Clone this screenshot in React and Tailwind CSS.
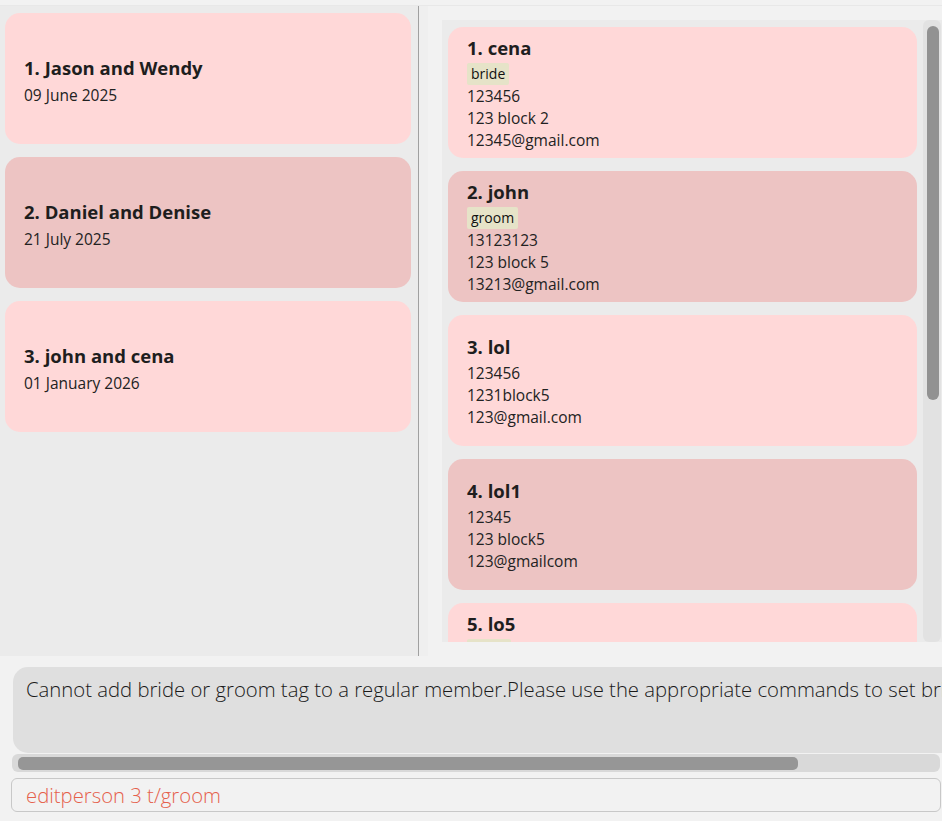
import React from "react"

const weddings = [
  { id: 1, title: "Jason and Wendy", date: "09 June 2025" },
  { id: 2, title: "Daniel and Denise", date: "21 July 2025" },
  { id: 3, title: "john and cena", date: "01 January 2026" },
]

const people = [
  { id: 1, name: "cena", tag: "bride", phone: "123456", address: "123 block 2", email: "12345@gmail.com" },
  { id: 2, name: "john", tag: "groom", phone: "13123123", address: "123 block 5", email: "13213@gmail.com" },
  { id: 3, name: "lol", phone: "123456", address: "1231block5", email: "123@gmail.com" },
  { id: 4, name: "lol1", phone: "12345", address: "123 block5", email: "123@gmailcom" },
  { id: 5, name: "lo5", tag: "guest", phone: "1234", address: "block 9", email: "lo5@gmail.com" },
]

const cardBg = (i) => (i % 2 === 0 ? "bg-[#ffd8d8]" : "bg-[#edc4c3]")

const WeddingCard = ({ wedding, index }) => (
  <div className={`h-[131px] shrink-0 rounded-[15px] ${cardBg(index)} px-[19px] pt-[4px] flex flex-col justify-center`}>
    <div className="text-[18.5px] leading-[26px] font-bold text-[#1e1e1e]">
      {wedding.id}. {wedding.title}
    </div>
    <div className="mt-[3px] text-[15.5px] leading-[22px] text-[#222]">{wedding.date}</div>
  </div>
)

const PersonCard = ({ person, index }) => (
  <div className={`h-[131px] shrink-0 rounded-[15px] ${cardBg(index)} px-[19px] pt-[2px] flex flex-col justify-center`}>
    <div className="text-[18.5px] leading-[22px] mb-[4px] font-bold text-[#1e1e1e]">
      {person.id}. {person.name}
    </div>
    {person.tag && (
      <div className="flex">
        <span className="h-[22px] px-[4px] rounded-[2px] bg-[#e6e3c8] text-[14px] leading-[22px] text-[#111]">
          {person.tag}
        </span>
      </div>
    )}
    <div className="text-[15.5px] leading-[22px] text-[#222]">{person.phone}</div>
    <div className="text-[15.5px] leading-[22px] text-[#222]">{person.address}</div>
    <div className="text-[15.5px] leading-[22px] text-[#222]">{person.email}</div>
  </div>
)

export default function App() {
  return (
    <div className="w-[942px] h-[821px] overflow-hidden bg-[#f2f2f2] flex flex-col font-['Open_Sans',sans-serif]">
      {/* Top strip */}
      <div className="h-[6px] shrink-0 border-b border-[#e8e8e8]" />

      {/* Lists */}
      <div className="h-[650px] shrink-0 flex">
        <div className="w-[418px] shrink-0 bg-[#ebebeb] pl-[5px] pr-[7px] pt-[7px] flex flex-col gap-[13px]">
          {weddings.map((w, i) => (
            <WeddingCard key={w.id} wedding={w} index={i} />
          ))}
        </div>
        <div className="w-px shrink-0 bg-[#a0a0a0]" />
        <div className="w-[9px] shrink-0 bg-[#efefef]" />
        <div className="flex-1 pl-[14px] py-[14px] flex">
          <div className="flex-1 bg-[#ebebeb] flex overflow-hidden">
            <div className="w-[469px] ml-[6px] pt-[7px] flex flex-col gap-[13px] overflow-hidden">
              {people.map((p, i) => (
                <PersonCard key={p.id} person={p} index={i} />
              ))}
            </div>
            {/* Scrollbar */}
            <div className="w-[18px] ml-[6px] rounded-[6px] bg-[#e2e2e2] pt-[6px] pl-[4px]">
              <div className="w-[12px] h-[374px] rounded-[6px] bg-[#929292]" />
            </div>
          </div>
        </div>
      </div>

      {/* Result display */}
      <div className="pt-[11px] pl-[13px] overflow-hidden">
        <div className="w-[1000px] h-[86px] rounded-l-[15px] bg-[#dfdfdf] pl-[13px] pt-[8px] text-[20.3px] leading-[28px] font-light text-[#1a1a1a] whitespace-nowrap">
          Cannot add bride or groom tag to a regular member.Please use the appropriate commands to set bride or groom.
        </div>
      </div>
      <div className="mt-px ml-[12px] w-[928px] h-[18px] rounded-[6px] bg-[#d9d9d9] pt-[3px] pl-[6px]">
        <div className="w-[780px] h-[13px] rounded-[5px] bg-[#969696]" />
      </div>

      {/* Command box */}
      <div className="mt-[6px] ml-[11px] w-[930px] h-[34px] rounded-[6px] border border-[#c8c8c8] px-[14px] flex items-center">
        <span className="text-[20.3px] font-light text-[#e5604b]">editperson 3 t/groom</span>
      </div>
    </div>
  )
}
